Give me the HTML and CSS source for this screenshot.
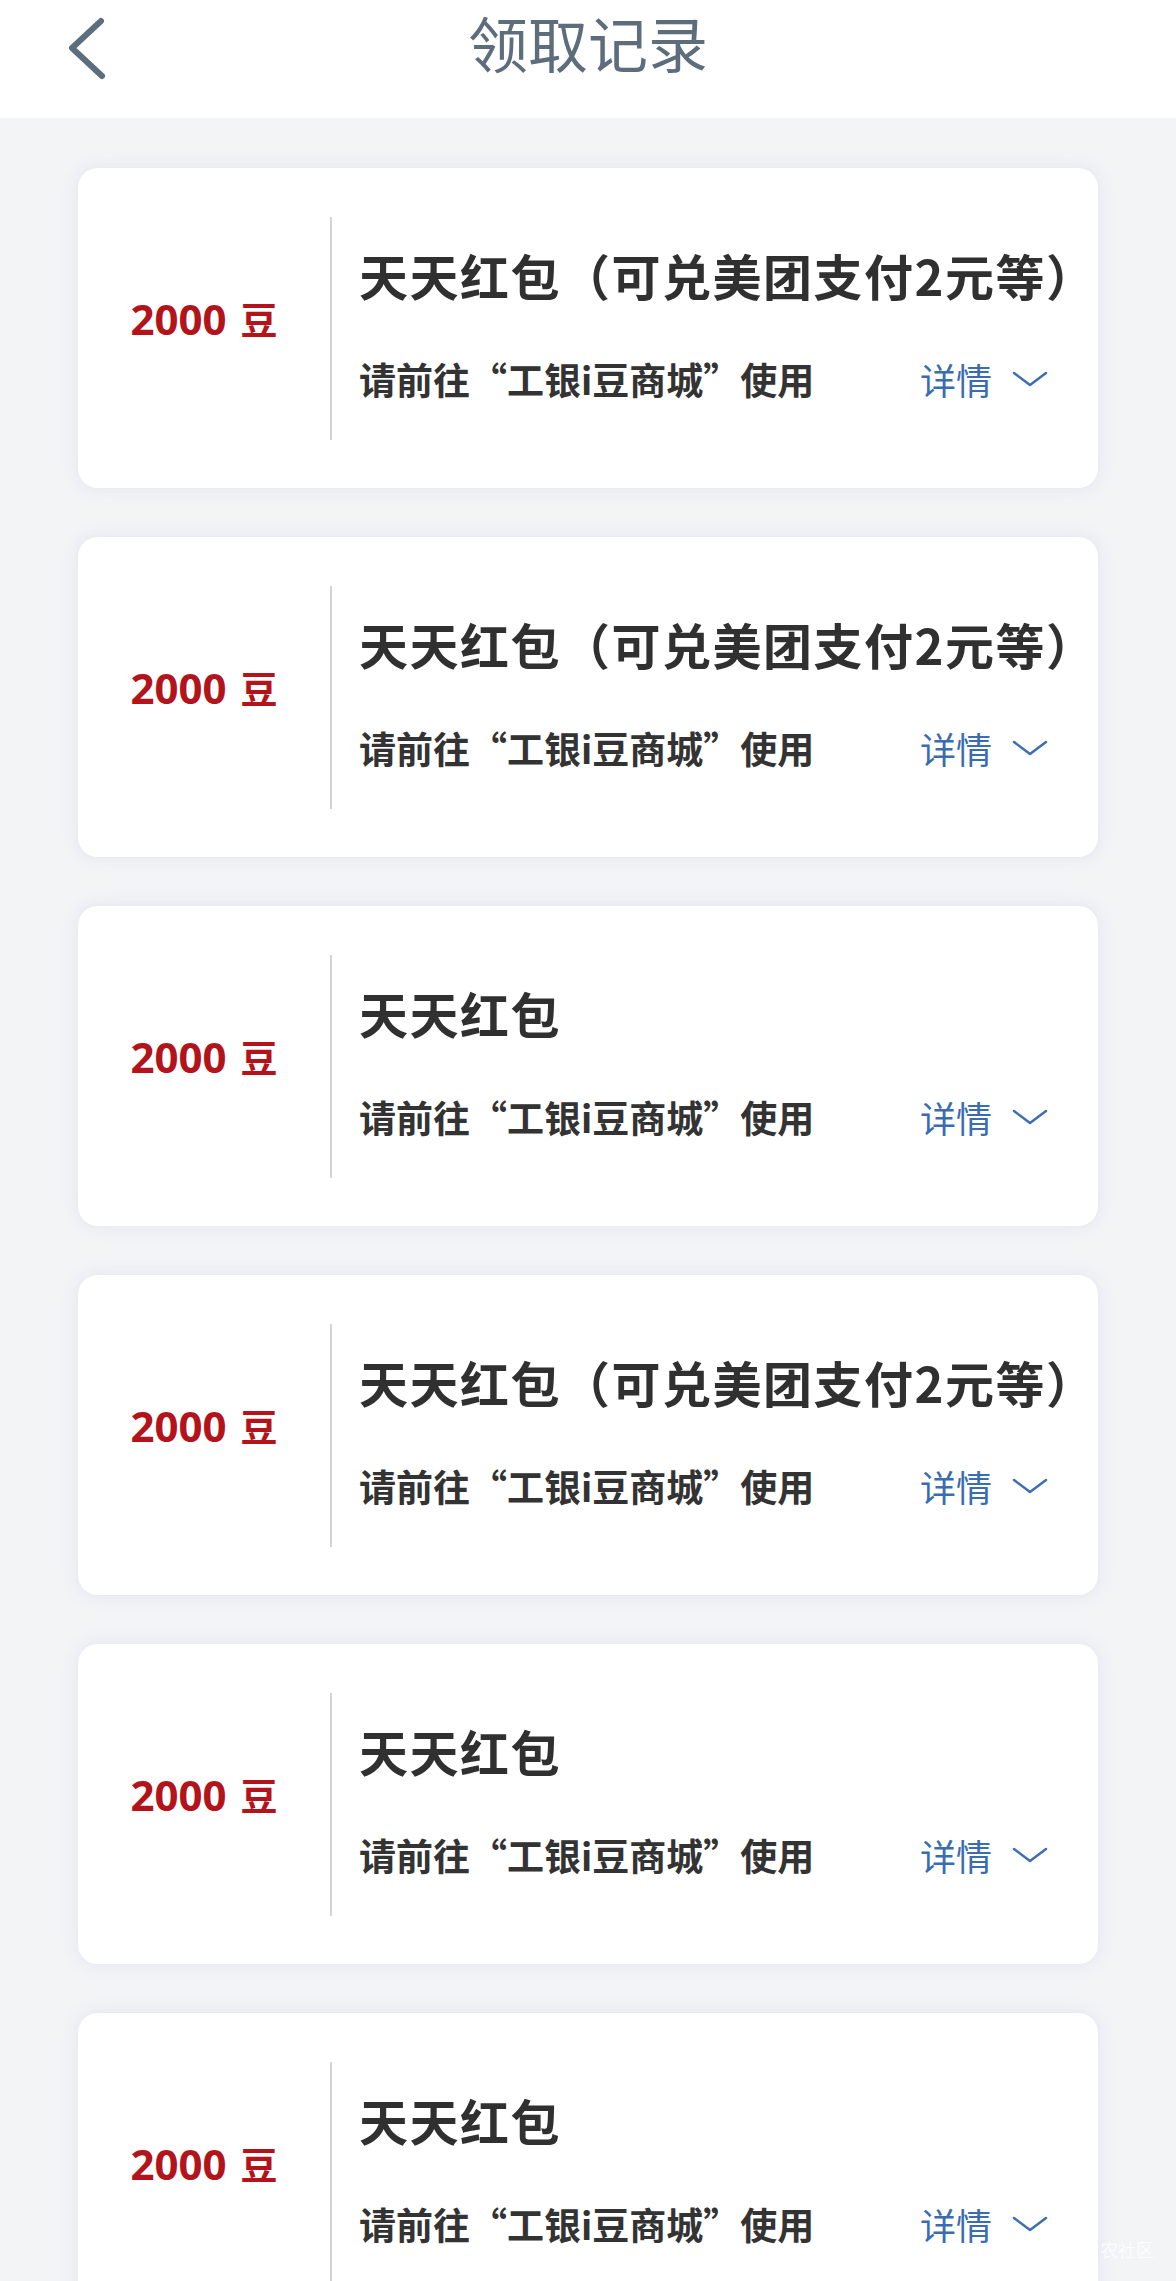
FILE: index.html
```html
<!DOCTYPE html>
<html lang="zh-CN">
<head>
    <meta charset="UTF-8">
    <meta name="viewport" content="width=device-width, initial-scale=1.0">
    <title>领取记录</title>
    <link rel="stylesheet" href="styles.css">
</head>
<body>

    <!-- Top Bar -->
    <div class="top-bar">
        <div class="back-btn">
            <svg width="40" height="64" viewBox="0 0 40 64">
                <polyline points="34,5 5,32 35,60" fill="none" stroke="#5a6e7f" stroke-width="6" stroke-linecap="round" stroke-linejoin="round" />
            </svg>
        </div>
        <h1>领取记录</h1>
        <div></div>
    </div>

    <!-- Record List -->
    <div id="recordList" class="record-list"></div>

    <div class="watermark">农社区</div>

    <script>
        const records = [
            { beans: 2000, title: '天天红包（可兑美团支付2元等）' },
            { beans: 2000, title: '天天红包（可兑美团支付2元等）' },
            { beans: 2000, title: '天天红包' },
            { beans: 2000, title: '天天红包（可兑美团支付2元等）' },
            { beans: 2000, title: '天天红包' },
            { beans: 2000, title: '天天红包' }
        ];

        // Build one card per record
        function displayRecords() {
            const list = document.getElementById('recordList');
            list.innerHTML = '';

            records.forEach(record => {
                const card = document.createElement('div');
                card.classList.add('record-card');
                card.innerHTML = `
                    <div class="amount"><span class="num">${record.beans}</span><span class="unit">豆</span></div>
                    <div class="divider"></div>
                    <div class="info">
                        <div class="title">${record.title}</div>
                        <div class="sub-row">
                            <span class="hint">请前往“工银i豆商城”使用</span>
                            <span class="detail">详情
                                <svg width="36" height="16" viewBox="0 0 36 16">
                                    <polyline points="2,2 18,14 34,2" fill="none" stroke="#3e6db0" stroke-width="2.5" stroke-linecap="round" stroke-linejoin="round" />
                                </svg>
                            </span>
                        </div>
                    </div>
                `;
                list.appendChild(card);
            });
        }

        displayRecords();
    </script>

</body>
</html>
```

FILE: styles.css
```css
/* Global Styles */
body {
    font-family: 'Noto Sans CJK SC', 'Noto Sans', sans-serif;
    margin: 0;
    padding: 0;
    background: #f3f4f6;
    color: #333;
}

/* Top Bar */
.top-bar {
    height: 118px;
    background: #fff;
    display: grid;
    grid-template-columns: 1fr auto 1fr;
    align-items: start;
    box-sizing: border-box;
    padding-top: 10px;
}

.back-btn {
    padding-left: 67px;
    padding-top: 6px;
}

.back-btn svg {
    display: block;
}

.top-bar h1 {
    margin: 0;
    font-size: 60px;
    line-height: 64px;
    font-weight: 400;
    color: #5d6d7c;
}

/* Record Cards */
.record-list {
    padding: 50px 78px 0;
    display: flex;
    flex-direction: column;
    gap: 49px;
}

.record-card {
    height: 320px;
    background: #fff;
    border-radius: 20px;
    box-shadow: 0 0 16px rgba(200, 208, 235, 0.45);
    display: flex;
    align-items: center;
    flex-shrink: 0;
}

.amount {
    width: 252px;
    flex-shrink: 0;
    text-align: center;
    color: #b3131b;
    font-weight: 700;
    padding-bottom: 20px;
    white-space: nowrap;
}

.amount .num {
    font-family: 'Noto Sans', sans-serif;
    font-size: 42px;
}

.amount .unit {
    font-size: 37px;
    margin-left: 14px;
}

.divider {
    width: 2px;
    height: 223px;
    flex-shrink: 0;
    background: #d4d4d4;
}

.info {
    flex: 1;
    min-width: 0;
    padding: 0 50px 6px 27px;
    display: flex;
    flex-direction: column;
    gap: 52px;
}

.title {
    font-size: 49px;
    line-height: 56px;
    font-weight: 700;
    letter-spacing: 1.5px;
    color: #303030;
    white-space: nowrap;
}

.sub-row {
    display: flex;
    justify-content: space-between;
    align-items: center;
    height: 48px;
}

.hint {
    font-size: 37px;
    font-weight: 700;
    color: #333;
    white-space: nowrap;
}

.detail {
    display: flex;
    align-items: center;
    gap: 20px;
    font-size: 36px;
    color: #3a6cb0;
}

.detail svg {
    display: block;
}

/* Watermark */
.watermark {
    position: absolute;
    left: 1100px;
    top: 2236px;
    font-size: 18px;
    color: rgba(255, 255, 255, 0.8);
}
```
